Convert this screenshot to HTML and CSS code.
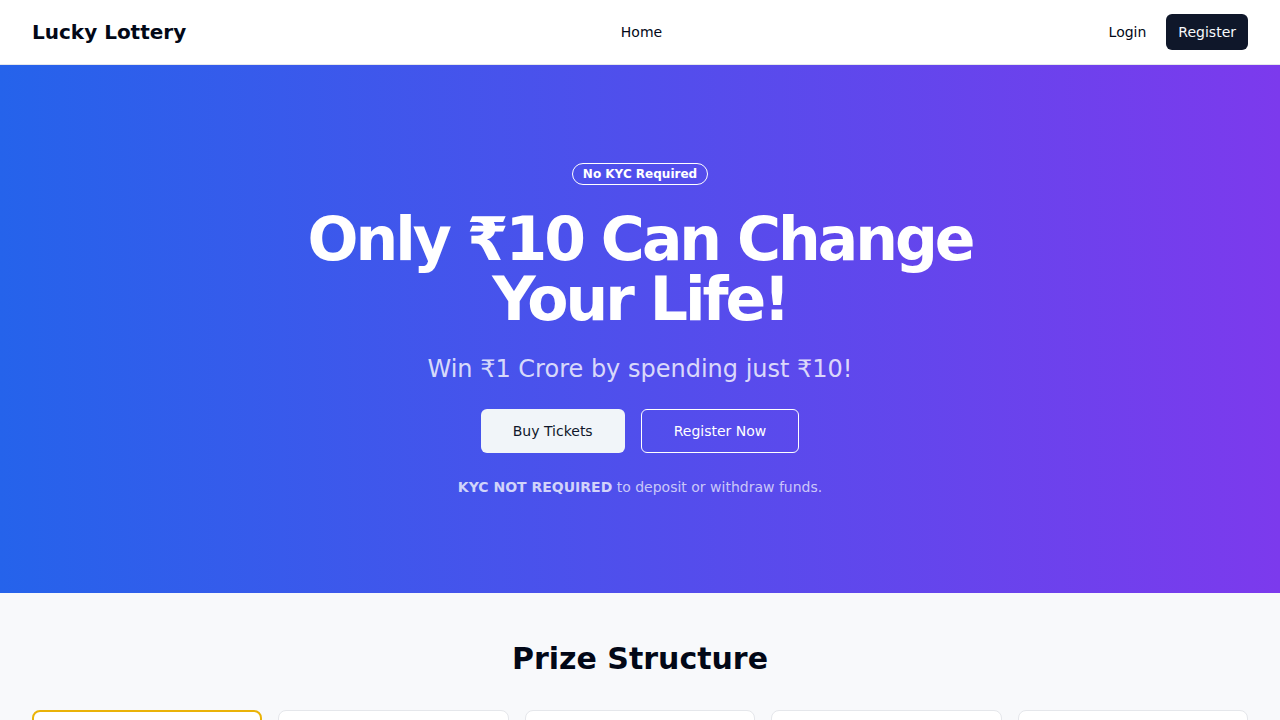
FILE: index.html
```html
<!DOCTYPE html>
<html lang="en">
<head>
<meta charset="utf-8">
<title>Lucky Lottery</title>
<link rel="stylesheet" href="styles.css">
</head>
<body>
<header class="site-header">
  <div class="brand">Lucky Lottery</div>
  <nav class="main-nav"><a href="#">Home</a></nav>
  <div class="auth">
    <a class="login" href="#">Login</a>
    <a class="btn-dark" href="#">Register</a>
  </div>
</header>
<section class="hero">
  <span class="badge">No KYC Required</span>
  <h1 class="hero-title">Only ₹10 Can Change<br>Your Life!</h1>
  <p class="hero-sub">Win ₹1 Crore by spending just ₹10!</p>
  <div class="hero-actions">
    <a class="btn-light" href="#">Buy Tickets</a>
    <a class="btn-outline" href="#">Register Now</a>
  </div>
  <p class="hero-note"><strong>KYC NOT REQUIRED</strong> to deposit or withdraw funds.</p>
</section>
<section class="prizes">
  <h2 class="section-title">Prize Structure</h2>
  <div class="prize-grid">
    <div class="prize-card featured"><div class="prize-rank">1st Prize</div><div class="prize-amount">₹1 Crore</div><div class="prize-meta">1 Winner</div></div>
    <div class="prize-card"><div class="prize-rank">2nd Prize</div><div class="prize-amount">₹10 Lakh</div><div class="prize-meta">5 Winners</div></div>
    <div class="prize-card"><div class="prize-rank">3rd Prize</div><div class="prize-amount">₹1 Lakh</div><div class="prize-meta">50 Winners</div></div>
    <div class="prize-card"><div class="prize-rank">4th Prize</div><div class="prize-amount">₹10,000</div><div class="prize-meta">500 Winners</div></div>
    <div class="prize-card"><div class="prize-rank">5th Prize</div><div class="prize-amount">₹1,000</div><div class="prize-meta">5000 Winners</div></div>
  </div>
</section>
</body>
</html>
```
FILE: styles.css
```css
* { box-sizing: border-box; }
html, body { margin: 0; padding: 0; }
body {
  font-family: "DejaVu Sans", sans-serif;
  color: #020817;
  background: #ffffff;
}
a { text-decoration: none; color: inherit; }

.site-header {
  height: 65px;
  border-bottom: 1px solid #e5e7eb;
  padding: 0 32px;
  display: grid;
  grid-template-columns: 1fr auto 1fr;
  align-items: center;
  background: #fff;
}
.brand {
  font-size: 20px;
  font-weight: 700;
  line-height: 28px;
}
.main-nav { font-size: 14px; line-height: 20px; padding-left: 3px; }
.auth {
  justify-self: end;
  display: flex;
  align-items: center;
  gap: 20px;
  font-size: 14px;
}
.btn-dark {
  background: #0f172a;
  color: #f8fafc;
  height: 36px;
  padding: 0 12px;
  border-radius: 6px;
  display: inline-flex;
  align-items: center;
}

.hero {
  background: linear-gradient(to right, #2563eb, #7c3aed);
  padding: 98px 16px 96px;
  display: flex;
  flex-direction: column;
  align-items: center;
  text-align: center;
  color: #fff;
}
.badge {
  font-size: 12px;
  font-weight: 700;
  line-height: 16px;
  border: 1px solid #fff;
  border-radius: 9999px;
  padding: 2px 10px;
  margin-bottom: 24px;
}
.hero-title {
  margin: 0 0 24px;
  font-size: 60px;
  line-height: 60px;
  font-weight: 700;
  letter-spacing: -3px;
}
.hero-sub {
  margin: 0 0 24px;
  font-size: 24px;
  line-height: 32px;
  color: rgba(255,255,255,0.8);
}
.hero-actions {
  display: flex;
  gap: 16px;
  margin-bottom: 24px;
}
.btn-light, .btn-outline {
  height: 44px;
  padding: 0 32px;
  border-radius: 6px;
  font-size: 14px;
  display: inline-flex;
  align-items: center;
}
.btn-light { background: #f1f5f9; color: #0f172a; }
.btn-outline { border: 1px solid #fff; color: #fff; }
.hero-note {
  margin: 0;
  font-size: 14px;
  line-height: 20px;
  color: rgba(255,255,255,0.7);
}
.hero-note strong { color: rgba(255,255,255,0.75); }

.prizes {
  background: #f8f9fb;
  padding: 48px 32px 48px;
}
.section-title {
  margin: 0 0 33px;
  text-align: center;
  font-size: 30px;
  line-height: 36px;
  font-weight: 700;
}
.prize-grid {
  display: grid;
  grid-template-columns: repeat(5, 1fr);
  gap: 16px;
}
.prize-card {
  background: #fff;
  border: 1px solid #e5e7eb;
  border-radius: 8px;
  padding: 24px;
  text-align: center;
}
.prize-card.featured { border: 2px solid #eab308; }
.prize-rank { font-size: 18px; font-weight: 700; }
.prize-amount { font-size: 24px; font-weight: 700; margin: 8px 0; }
.prize-meta { font-size: 14px; color: #64748b; }
```
